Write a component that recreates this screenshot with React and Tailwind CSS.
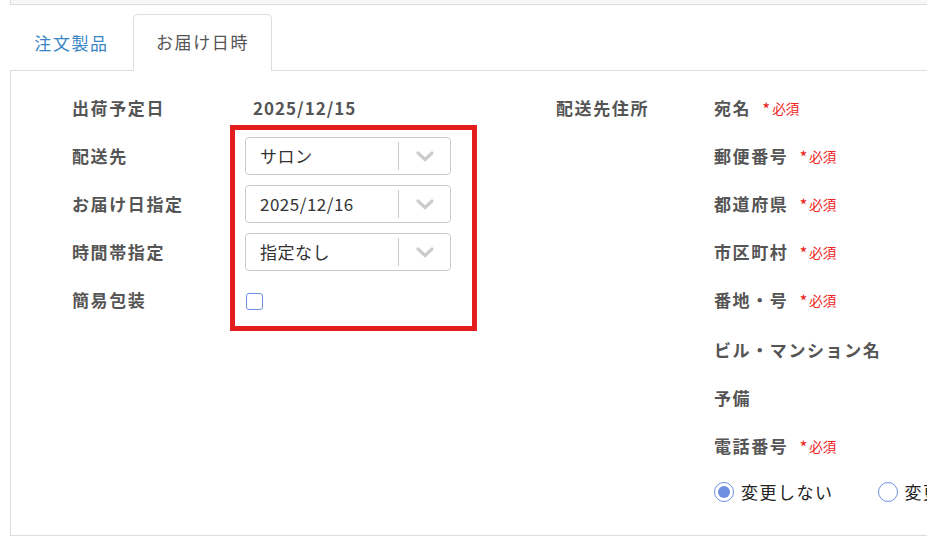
import React from "react";

const FONT = { fontFamily: '"Noto Sans CJK JP", "Noto Sans", sans-serif' };

function Chevron() {
  return (
    <svg width="18" height="11" viewBox="0 0 18 11">
      <polyline points="2,2 9,8.5 16,2" fill="none" stroke="#cccccc" strokeWidth="3.2" strokeLinecap="round" strokeLinejoin="round" />
    </svg>
  );
}

function Select({ value }) {
  return (
    <div className="flex h-[38px] w-[206px] items-center rounded-[4px] border border-[#cccccc] bg-white">
      <div className="flex-1 pl-[14px] text-[17px] tracking-[0.5px] text-[#333333]">{value}</div>
      <div className="h-[28px] w-px bg-[#cccccc]" />
      <div className="flex w-[51px] items-center justify-center">
        <Chevron />
      </div>
    </div>
  );
}

function Label({ children }) {
  return <span className="text-[17px] font-bold tracking-[1.6px] text-[#555555]">{children}</span>;
}

function Required() {
  return (
    <span className="ml-[11px] flex items-center text-[#ee2222]">
      <span className="text-[17px] leading-none">*</span>
      <span className="ml-[2px] text-[13.5px]">必須</span>
    </span>
  );
}

function RightRow({ label, req }) {
  return (
    <div className="flex h-[48px] items-center">
      <Label>{label}</Label>
      {req && <Required />}
    </div>
  );
}

export default function App() {
  return (
    <div className="relative h-[537px] w-[927px] overflow-hidden bg-white" style={FONT}>
      <div className="ml-[10px] h-[5px] border-b border-l border-[#dddddd] bg-[#f7f7f7]" />
      <div className="mt-[9px] flex h-[57px] items-end pl-[10px]">
        <div className="flex h-[56px] w-[123px] shrink-0 items-center justify-center border-b border-[#dddddd]">
          <span className="text-[17px] tracking-[1.6px] text-[#3a85c6]">注文製品</span>
        </div>
        <div className="flex h-[57px] w-[139px] shrink-0 items-center justify-center rounded-t-[5px] border border-b-0 border-[#dddddd] bg-white pb-[2px]">
          <span className="text-[17px] tracking-[1.6px] text-[#555555]">お届け日時</span>
        </div>
        <div className="h-[56px] flex-1 border-b border-[#dddddd]" />
      </div>
      <div className="relative ml-[10px] flex h-[465px] border-b border-l border-[#dddddd] pl-[61px] pt-[13px]">
        <div className="grid w-[484px] shrink-0 grid-cols-[173px_1fr] auto-rows-[48px] items-center">
          <Label>出荷予定日</Label>
          <span className="pl-[8px] text-[17px] font-bold tracking-[1px] text-[#555555]">2025/12/15</span>
          <Label>配送先</Label>
          <Select value="サロン" />
          <Label>お届け日指定</Label>
          <Select value="2025/12/16" />
          <Label>時間帯指定</Label>
          <Select value="指定なし" />
          <Label>簡易包装</Label>
          <div className="pl-[1px] pt-[2px]">
            <div className="h-[17px] w-[17px] rounded-[3px] border-[1.5px] border-[#6f8fe0] bg-white" />
          </div>
        </div>
        <div className="flex shrink-0">
          <div className="flex h-[48px] w-[158px] shrink-0 items-center">
            <Label>配送先住所</Label>
          </div>
          <div className="flex flex-col">
            <RightRow label="宛名" req />
            <RightRow label="郵便番号" req />
            <RightRow label="都道府県" req />
            <RightRow label="市区町村" req />
            <RightRow label="番地・号" req />
            <div className="flex h-[50px] items-center pt-[2px]">
              <Label>ビル・マンション名</Label>
            </div>
            <RightRow label="予備" />
            <RightRow label="電話番号" req />
            <div className="flex h-[44px] items-center whitespace-nowrap">
              <span className="flex items-center">
                <span className="flex h-[20px] w-[20px] items-center justify-center rounded-full border-[1.5px] border-[#6f8fe0]">
                  <span className="h-[12px] w-[12px] rounded-full bg-[#6f8fe0]" />
                </span>
                <span className="ml-[7px] text-[17px] tracking-[1.5px] text-[#222222]">変更しない</span>
              </span>
              <span className="ml-[44px] flex items-center">
                <span className="h-[20px] w-[20px] rounded-full border-[1.5px] border-[#6f8fe0]" />
                <span className="ml-[7px] text-[17px] tracking-[1.5px] text-[#222222]">変更する</span>
              </span>
            </div>
          </div>
        </div>
        <div className="absolute left-[219px] top-[54px] h-[206px] w-[247px] border-[5px] border-[#e41d1d]" />
      </div>
    </div>
  );
}
